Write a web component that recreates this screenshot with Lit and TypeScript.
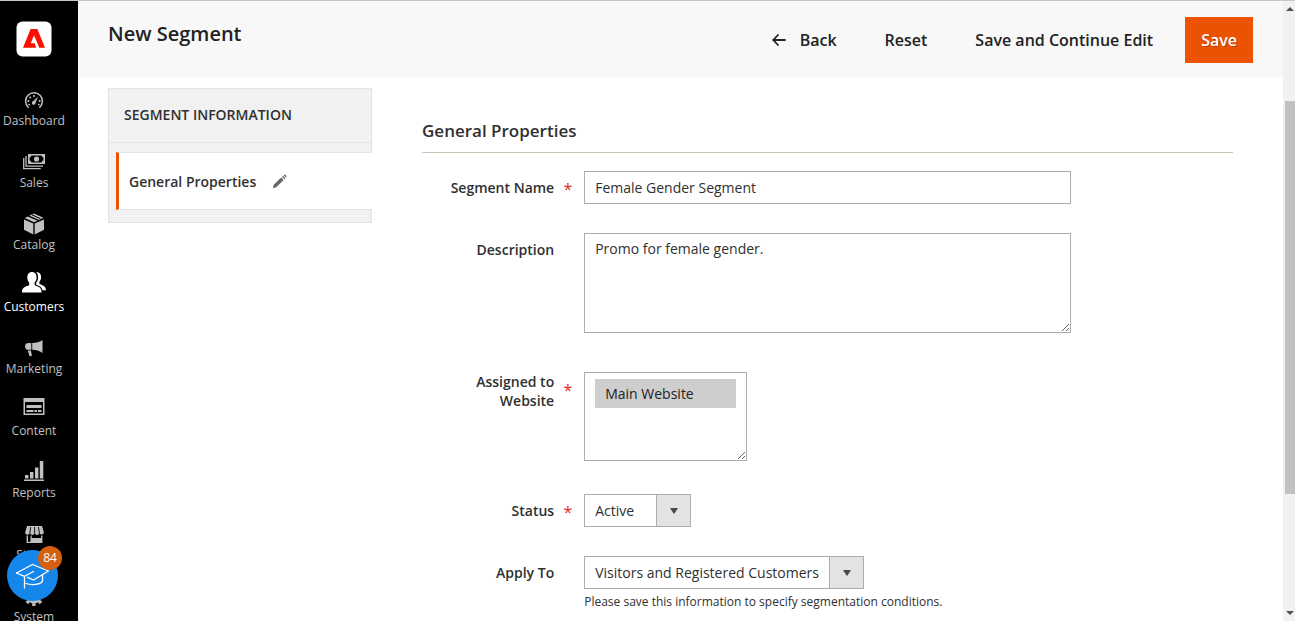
import { LitElement, html, css, svg, nothing, TemplateResult } from "lit";
import { customElement, property } from "lit/decorators.js";
import { classMap } from "lit/directives/class-map.js";

interface NavEntry {
  label: string;
  icon: TemplateResult;
  current?: boolean;
}

const NAV: NavEntry[] = [
  {
    label: "Dashboard",
    icon: svg`
      <path d="M6.2 18.2A8.4 8.4 0 1 1 17.8 18.2" fill="none" stroke="currentColor" stroke-width="1.5" stroke-linecap="round"/>
      <path d="M16.2 7.4l-2.6 6.2a1.9 1.9 0 1 1-2.2-1.6z" fill="currentColor"/>
      <circle cx="12" cy="7" r="1" fill="currentColor"/><circle cx="8.2" cy="8.4" r="1" fill="currentColor"/>
      <circle cx="6.4" cy="12" r="1" fill="currentColor"/><circle cx="17.6" cy="12" r="1" fill="currentColor"/>
      <circle cx="7.2" cy="15.6" r=".9" fill="currentColor"/><circle cx="16.8" cy="15.6" r=".9" fill="currentColor"/>`,
  },
  {
    label: "Sales",
    icon: svg`
      <path fill="currentColor" fill-rule="evenodd" d="M6 3h17v10H6zM9.5 4.6A2.6 2.6 0 0 1 7.6 6.4v3.2a2.6 2.6 0 0 1 1.900 1.800h10A2.600 2.600 0 0 1 21.400 9.600V6.400A2.600 2.600 0 0 1 19.500 4.600z"/>
      <circle cx="14.500" cy="8" r="2.600" fill="currentColor"/>
      <path d="M4 5v10.200h17M1.700 7v10.600h17" fill="none" stroke="currentColor" stroke-width="1.300"/>`,
  },
  {
    label: "Catalog",
    icon: svg`
      <path fill="currentColor" d="M2 6.400l9.300 4.200V21.500L2 16.800zM22 6.400l-9.300 4.200V21.500L22 16.800zM2.600 5l3.300-1.600 9.600 4.200L12 9.300zM7.200 2.800L12 .4l9.400 4.400-4.500 2.100zM9 2.400z"/>
      <path d="M6.600 3.100l9.600 4.200M10 1.800l8.500 4" stroke="#000" stroke-width="1" fill="none"/>`,
  },
  {
    label: "Customers",
    current: true,
    icon: svg`
      <path fill="currentColor" d="M10 -3c3 0 4.600 2.300 4.600 5.200 0 2.300-.8 4.100-2 5.200v2c0 .8.700 1.200 2 1.700 3.400 1.200 5 2.400 5 6.300H0c0-3.900 1.700-5.100 5-6.300 1.500-.5 2.200-.9 2.200-1.700v-2c-1.200-1.100-1.900-2.900-1.900-5.200C5.300-.7 7-3 10-3z"/>
      <path fill="currentColor" d="M14.200 -3c3.200-.2 4.900 2 4.900 5 0 2-.7 3.700-1.700 4.800v1.400c0 .7.400 1 1.500 1.400 3 1.200 4.900 2.300 5.100 5.700h-3.500c-.600-2.800-2.300-4.200-5.700-5.400-.500-.2-.700-.400-.700-.700v-1.300c1.200-1.300 2-3.300 2-5.700 0-2.200-.700-4-1.900-5.200z"/>`,
  },
  {
    label: "Marketing",
    icon: svg`
      <path fill="currentColor" d="M9.300 6v6.800H6.500A3.400 3.400 0 0 1 6.500 6zM10.200 6c4 0 7-.8 10.300-3v13c-3.300-2.300-6.300-3.200-10.300-3.200zM5.800 13.400h3l1.200 5.400-2.500.5z"/>`,
  },
  {
    label: "Content",
    icon: svg`
      <path fill="currentColor" fill-rule="evenodd" d="M1.500-1h21v17h-21zM3 3v11.500h18V3z"/>
      <path fill="currentColor" d="M4.500 6h15v3h-15zM4.500 11h7v2h-7zM12.500 11h2.500v2h-2.500zM16 11h3.500v2h-3.500z"/>`,
  },
  {
    label: "Reports",
    icon: svg`
      <path fill="currentColor" d="M2 18.600h20V20H2zM3 14h3.400v3.600H3zM8 11h3.400v6.600H8zM13 6.500h3.400v11.100H13zM17.800 0h3.500v17.600h-3.500z"/>`,
  },
  {
    label: "Stores",
    icon: svg`
      <path fill="currentColor" d="M5 3h15l1.800 6a2.200 2.200 0 0 1-4.400.6 2.300 2.300 0 0 1-4.700 0 2.300 2.300 0 0 1-4.700 0A2.200 2.200 0 0 1 3.200 9z"/>
      <path d="M8.600 4l-.7 6M12.600 4v6M16.500 4l.8 6" stroke="#000" stroke-width=".9"/>
      <path fill="currentColor" fill-rule="evenodd" d="M4.600 12.500H6v6.200h2.500v-6.200h1.200V15h9.400v-2.500h1.300V20H4.600z"/>`,
  },
  {
    label: "System",
    icon: svg`
      <circle cx="12" cy="11" r="5.500" fill="none" stroke="currentColor" stroke-width="4"/>
      <circle cx="12" cy="11" r="8.500" fill="none" stroke="currentColor" stroke-width="3" stroke-dasharray="3.340 3.340" stroke-dashoffset="1.670"/>`,
  },
];

@customElement("admin-menu")
class AdminMenu extends LitElement {
  static styles = css`
    :host {
      display: block;
      flex: none;
      width: 68px;
      padding-right: 10px;
      background: #000;
      position: relative;
      overflow: hidden;
      font-family: "Open Sans", "Noto Sans", sans-serif;
    }
    .logo {
      display: block;
      width: 36px;
      height: 36px;
      margin: 20px auto 32px;
    }
    .logo svg { display: block; }
    .list { list-style: none; margin: 0; padding: 0; }
    .link {
      display: block;
      height: 62px;
      color: #c0c0c0;
      font-size: 12px;
      line-height: 16px;
      text-align: center;
      text-decoration: none;
    }
    .link.current { color: #fff; }
    .icon { display: block; margin: 0 auto; overflow: visible; }
    .help {
      position: absolute;
      left: 7px;
      bottom: 20px;
      width: 51px;
      height: 51px;
      padding: 0;
      border: 0;
      border-radius: 50%;
      background: #1587eb;
      font: inherit;
    }
    .help svg { display: block; }
    .count {
      position: absolute;
      top: -4px;
      right: -4px;
      width: 24px;
      height: 24px;
      border-radius: 50%;
      background: #d4600f;
      color: #fff;
      font-size: 12px;
      line-height: 24px;
      text-align: center;
    }
  `;

  render() {
    return html`
      <a class="logo" href="#" aria-label="Adobe Commerce">
        <svg width="36" height="36" viewBox="0 0 36 36" aria-hidden="true">
          <rect x=".5" y=".5" width="35" height="35" rx="6" fill="#fff"/>
          <path fill="#fa0f00" d="M14.800 8h6.400l8 18.700h-6.300l-2-5.200-1.600 0 2 5.200h-2.800l-1.700-4h-3.700l3.900-9.600 4.300 8.400h1.100L18 12.900l-4.800 13.800H7z" style="display:none"/>
          <path fill="#fa0f00" d="M14.600 8h6.700l7.700 18.700h-5.700L18 14.300l-3.200 8h3.800l1.600 4.400H7z"/>
        </svg>
      </a>
      <nav aria-label="Main">
        <ul class="list">
          ${NAV.map(
            (n) => html`<li>
              <a class=${classMap({ link: true, current: !!n.current })} href="#">
                <svg class="icon" width="24" height="24" viewBox="0 0 24 24" aria-hidden="true">${n.icon}</svg>
                ${n.label}
              </a>
            </li>`
          )}
        </ul>
      </nav>
      <button class="help" type="button" aria-label="Guides">
        <svg width="51" height="51" viewBox="0 0 51 51" fill="none" stroke="#fff" stroke-width="1.300" stroke-linejoin="round" stroke-linecap="round" aria-hidden="true">
          <path d="M9.500 23L25.500 14.500 41.500 21 26.500 30 20.500 27.400"/>
          <path d="M9.500 23L17.500 26.300 26.500 21.500"/>
          <path d="M17.500 26.300V38M19 33.500c5 1.800 15 1.500 16.500-2.500V25"/>
        </svg>
        <span class="count">84</span>
      </button>
    `;
  }
}

@customElement("scroll-rail")
class ScrollRail extends LitElement {
  static styles = css`
    :host {
      display: flex;
      flex-direction: column;
      flex: none;
      width: 12px;
      background: #f1f1f1;
    }
    .arrow { display: block; flex: none; margin-left: 3px; }
    .before { flex: 83; }
    .thumb { flex: 393; margin-left: 2px; background: #c1c1c1; }
    .after { flex: 110; }
  `;

  render() {
    return html`
      <svg class="arrow" width="9" height="17" viewBox="0 0 9 17" aria-hidden="true"><path d="M0 10L4 6 8 10z" fill="#505050"/></svg>
      <div class="before"></div>
      <div class="thumb"></div>
      <div class="after"></div>
      <svg class="arrow" width="9" height="17" viewBox="0 0 9 17" aria-hidden="true"><path d="M0 7L4 11 8 7z" fill="#505050"/></svg>
    `;
  }
}

@customElement("app-root")
class AppRoot extends LitElement {
  @property() segmentName = "Female Gender Segment";
  @property() description = "Promo for female gender.";

  static styles = css`
    :host {
      display: flex;
      box-sizing: border-box;
      height: 100vh;
      overflow: hidden;
      border-top: 1px solid #c6c6c6;
      background: #fff;
      color: #303030;
      font-family: "Open Sans", "Noto Sans", sans-serif;
      font-size: 14px;
      line-height: 19px;
    }
    .page { flex: 1; min-width: 0; }
    .header {
      display: flex;
      justify-content: space-between;
      align-items: flex-start;
      padding: 16px 30px 15px;
      background: #f8f8f8;
    }
    .title {
      margin: 0;
      font-size: 20px;
      line-height: 34px;
      font-weight: 600;
      color: #222;
    }
    .actions { display: flex; gap: 16px; }
    .action {
      display: flex;
      align-items: center;
      gap: 14px;
      height: 46px;
      padding: 0 16px;
      border: 0;
      background: none;
      color: #222;
      font: 600 16px/22px "Open Sans", "Noto Sans", sans-serif;
    }
    .primary {
      background: #eb5202;
      color: #fff;
      text-shadow: 1px 1px 0 rgba(0, 0, 0, 0.25);
    }
    .body {
      display: flex;
      align-items: flex-start;
      gap: 50px;
      padding: 10px 50px 0 30px;
    }
    .tabs {
      box-sizing: border-box;
      flex: none;
      width: 264px;
      padding-bottom: 12px;
      border: 1px solid #e3e3e3;
      background: #f1f1f1;
    }
    .tabs-title {
      margin: 0 0 9px;
      padding: 16px 15px 18px;
      border-bottom: 1px solid #e3e3e3;
      font-size: 14px;
      line-height: 19px;
      font-weight: 600;
      text-transform: uppercase;
    }
    .tab {
      display: flex;
      align-items: center;
      gap: 16px;
      height: 56px;
      margin: 0 -1px 0 7px;
      padding-left: 10px;
      border: 1px solid #e3e3e3;
      border-width: 1px 0;
      border-left: 3px solid #eb5202;
      background: #fff;
      color: #303030;
      font-weight: 600;
      text-decoration: none;
    }
    .form { flex: 1; min-width: 0; }
    .legend {
      margin: 0 0 18px;
      padding: 31px 0 10px;
      border-bottom: 1px solid #cac3b4;
      font-size: 17px;
      line-height: 23px;
      font-weight: 600;
    }
    .field {
      display: grid;
      grid-template-columns: 20% 60%;
      align-items: start;
      margin-bottom: 29px;
    }
    .field.area { margin-bottom: 39px; }
    .field.list { margin-bottom: 33px; }
    .label {
      position: relative;
      padding: 7px 30px 0 0;
      font-weight: 600;
      text-align: right;
    }
    .list .label { padding-top: 0; }
    .required::after {
      content: "*";
      position: absolute;
      top: 9px;
      right: 12px;
      color: #e22626;
      font-size: 16px;
      font-weight: 400;
    }
    .control { display: flex; flex-direction: column; align-items: flex-start; }
    .input, .select, .multi {
      box-sizing: border-box;
      margin: 0;
      border: 1px solid #adadad;
      border-radius: 0;
      background-color: #fff;
      color: #303030;
      font: 400 14px/19px "Open Sans", "Noto Sans", sans-serif;
      outline: none;
    }
    .input { width: 100%; height: 33px; padding: 5px 10px; }
    textarea.input { display: block; height: 100px; resize: vertical; }
    .multi { width: 163px; height: 89px; padding: 6px 10px; resize: both; overflow: auto; }
    .multi option { padding: 5px 10px; }
    .multi option:checked { background: #cecece linear-gradient(#cecece, #cecece); color: #222; }
    .select {
      appearance: none;
      height: 33px;
      padding: 0 44px 0 10px;
      background-image:
        url("data:image/svg+xml,%3Csvg xmlns='http://www.w3.org/2000/svg' width='8' height='6'%3E%3Cpath d='M0 0h8L4.500 5.500h-1z' fill='%23514943'/%3E%3C/svg%3E"),
        linear-gradient(#e3e3e3, #e3e3e3),
        linear-gradient(#adadad, #adadad);
      background-position: right 12px center, right, right;
      background-size: 8px 6px, 33px 100%, 34px 100%;
      background-repeat: no-repeat;
    }
    .note { margin: 5px 0 0; font-size: 12px; line-height: 16px; }
  `;

  private label(id: string, text: string, required = false) {
    return html`<label for=${id} class=${classMap({ label: true, required })}>${text}</label>`;
  }

  render() {
    return html`
      <admin-menu></admin-menu>
      <main class="page">
        <header class="header">
          <h1 class="title">New Segment</h1>
          <div class="actions">
            <button class="action" type="button">
              <svg width="14" height="14" viewBox="0 0 14 14" fill="none" stroke="#222" stroke-width="1.800" stroke-linecap="round" stroke-linejoin="round" aria-hidden="true">
                <path d="M13 7H1.200M6 2L1.200 7 6 12"/>
              </svg>Back
            </button>
            <button class="action" type="button">Reset</button>
            <button class="action" type="button">Save and Continue Edit</button>
            <button class="action primary" type="button">Save</button>
          </div>
        </header>
        <div class="body">
          <section class="tabs">
            <h2 class="tabs-title">Segment Information</h2>
            <a class="tab" href="#">
              General Properties
              <svg width="15" height="15" viewBox="0 0 15 15" fill="#666" aria-hidden="true">
                <path d="M.8 14.200l1-3.400 7.400-7.200 2.400 2.400-7.400 7.200zM10 2.800l1-1 2.400 2.400-1 1zM11.700 1.200l.5-.5a.8.8 0 0 1 1.100 0l1 1.100a.8.8 0 0 1 0 1.100l-.4.500z"/>
              </svg>
            </a>
          </section>
          <form class="form">
            <h2 class="legend">General Properties</h2>
            <div class="field">
              ${this.label("name", "Segment Name", true)}
              <div class="control"><input class="input" id="name" type="text" .value=${this.segmentName} /></div>
            </div>
            <div class="field area">
              ${this.label("description", "Description")}
              <div class="control"><textarea class="input" id="description" .value=${this.description}></textarea></div>
            </div>
            <div class="field list">
              ${this.label("website", "Assigned to Website", true)}
              <div class="control">
                <select class="multi" id="website" multiple><option selected>Main Website</option></select>
              </div>
            </div>
            <div class="field">
              ${this.label("status", "Status", true)}
              <div class="control">
                <select class="select" id="status"><option selected>Active</option><option>Inactive</option></select>
              </div>
            </div>
            <div class="field">
              ${this.label("apply", "Apply To")}
              <div class="control">
                <select class="select" id="apply">
                  <option selected>Visitors and Registered Customers</option>
                  <option>Registered Customers</option>
                  <option>Visitors</option>
                </select>
                <p class="note">Please save this information to specify segmentation conditions.</p>
              </div>
            </div>
          </form>
        </div>
      </main>
      <scroll-rail></scroll-rail>
    `;
  }
}
